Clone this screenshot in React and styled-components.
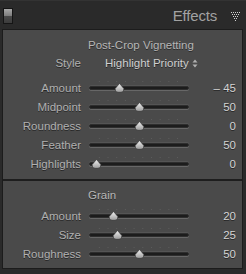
import React from 'react';
import styled, { createGlobalStyle } from 'styled-components';

const Global = createGlobalStyle`
  html, body { margin: 0; padding: 0; background: #2a2a2a; }
  body { font-family: "Liberation Sans", Arial, sans-serif; }
`;

const Wrap = styled.div`
  width: 246px;
  height: 274px;
  background: #2a2a2a;
  overflow: hidden;
`;

const Header = styled.div`
  height: 29px;
  display: flex;
  align-items: center;
  padding: 0 6px 0 3px;
  box-sizing: border-box;
  border-top: 1px solid #333;
`;

const Switch = styled.div`
  width: 8px;
  height: 14px;
  border: 1px solid #151515;
  background: linear-gradient(#a8a8a8 0%, #7c7c7c 50%, #4a4a4a 52%, #3c3c3c 100%);
  margin-top: 1px;
`;

const Title = styled.div`
  margin-left: auto;
  margin-right: 14px;
  font-size: 15px;
  color: #a2a2a2;
  letter-spacing: -0.2px;
  padding-top: 1px;
`;

const Panel = styled.div`
  margin-left: 2px;
  width: 241px;
  box-sizing: border-box;
  background: #4a4a4a;
  border: 1px solid #1c1c1c;
`;

const Section = styled.div`
  padding: ${p => p.pad};
  border-top: ${p => (p.divided ? '2px solid #1e1e1e' : 'none')};
`;

const Heading = styled.div`
  height: 18px;
  line-height: 18px;
  padding-left: 85px;
  font-size: 11.5px;
  color: #b6b6b6;
  text-shadow: 0 1px 0 rgba(0, 0, 0, 0.45);
`;

const Row = styled.div`
  display: grid;
  grid-template-columns: 78px 100px 39px;
  column-gap: 8px;
  align-items: center;
  height: ${p => p.h || 19}px;
`;

const Label = styled.div`
  text-align: right;
  font-size: 11.5px;
  color: #b0b0b0;
  text-shadow: 0 1px 0 rgba(0, 0, 0, 0.5);
`;

const StyleValue = styled.div`
  grid-column: 2 / 4;
  padding-left: 16px;
  font-size: 11.5px;
  color: #d0d0d0;
  text-shadow: 0 1px 0 rgba(0, 0, 0, 0.5);
  display: flex;
  align-items: center;
  gap: 3px;
`;

const Value = styled.div`
  text-align: right;
  font-size: 11.5px;
  color: #d4d4d4;
  text-shadow: 0 1px 0 rgba(0, 0, 0, 0.5);
`;

const Track = styled.div`
  position: relative;
  height: 19px;
  &::before {
    content: '';
    position: absolute;
    left: 6px;
    right: 6px;
    top: 3px;
    height: 1px;
    background-image: radial-gradient(circle, #5c5c5c 0.6px, transparent 0.8px);
    background-size: 8.7px 1px;
  }
  &::after {
    content: '';
    position: absolute;
    left: 0;
    right: 0;
    top: 8px;
    height: 2px;
    border-radius: 2px;
    background: #1c1c1c;
    border: 1px solid #2e2e2e;
    box-shadow: 0 1px 0 rgba(255, 255, 255, 0.16), 0 -1px 0 rgba(255, 255, 255, 0.06);
  }
`;

const Thumb = styled.svg`
  position: absolute;
  top: 5px;
  width: 11px;
  height: 10px;
  margin-left: -5.5px;
  z-index: 1;
`;

function Slider({ frac }) {
  return (
    <Track>
      <Thumb style={{ left: 7 + frac * 87 }} viewBox="0 0 11 10">
        <defs>
          <linearGradient id="tg" x1="0" y1="0" x2="0" y2="1">
            <stop offset="0" stopColor="#f2f2f2" />
            <stop offset="1" stopColor="#9c9c9c" />
          </linearGradient>
        </defs>
        <path d="M5.5 0.5 L9.8 5.5 Q10.4 9.2 7 9.3 L4 9.3 Q0.6 9.2 1.2 5.5 Z" fill="url(#tg)" stroke="#2a2a2a" strokeWidth="0.6" />
      </Thumb>
    </Track>
  );
}

function SliderRow({ label, value, frac }) {
  return (
    <Row>
      <Label>{label}</Label>
      <Slider frac={frac} />
      <Value>{value}</Value>
    </Row>
  );
}

const Gap = styled.div`
  height: ${p => p.h}px;
`;

function Collapse() {
  const dots = [];
  for (let r = 0; r < 5; r++) {
    for (let c = r; c < 9 - r; c += 2) {
      dots.push(<rect key={r + '-' + c} x={c} y={r * 2} width="1" height="1" fill="#d0d0d0" />);
    }
  }
  return (
    <svg width="9" height="9" viewBox="0 0 9 9" style={{ marginTop: 2 }}>
      {dots}
    </svg>
  );
}

function UpDown() {
  return (
    <svg width="6" height="9" viewBox="0 0 6 9">
      <path d="M3 0.5 L5.5 3.5 L0.5 3.5 Z M3 8.5 L5.5 5.5 L0.5 5.5 Z" fill="#b0b0b0" />
    </svg>
  );
}

const vignette = [
  { label: 'Amount', value: '– 45', frac: 0.275 },
  { label: 'Midpoint', value: '50', frac: 0.5 },
  { label: 'Roundness', value: '0', frac: 0.5 },
  { label: 'Feather', value: '50', frac: 0.5 },
  { label: 'Highlights', value: '0', frac: 0 },
];

const grain = [
  { label: 'Amount', value: '20', frac: 0.2 },
  { label: 'Size', value: '25', frac: 0.25 },
  { label: 'Roughness', value: '50', frac: 0.5 },
];

export default function App() {
  return (
    <Wrap>
      <Global />
      <Header>
        <Switch />
        <Title>Effects</Title>
        <Collapse />
      </Header>
      <Panel>
        <Section pad="6px 0 6px 0">
          <Heading>Post-Crop Vignetting</Heading>
          <Row h={18}>
            <Label>Style</Label>
            <StyleValue>
              Highlight Priority <UpDown />
            </StyleValue>
          </Row>
          <Gap h={6} />
          {vignette.map(s => (
            <SliderRow key={s.label} {...s} />
          ))}
        </Section>
        <Section divided pad="5px 0 5px 0">
          <Heading>Grain</Heading>
          <Gap h={2} />
          {grain.map(s => (
            <SliderRow key={s.label} {...s} />
          ))}
        </Section>
      </Panel>
    </Wrap>
  );
}
